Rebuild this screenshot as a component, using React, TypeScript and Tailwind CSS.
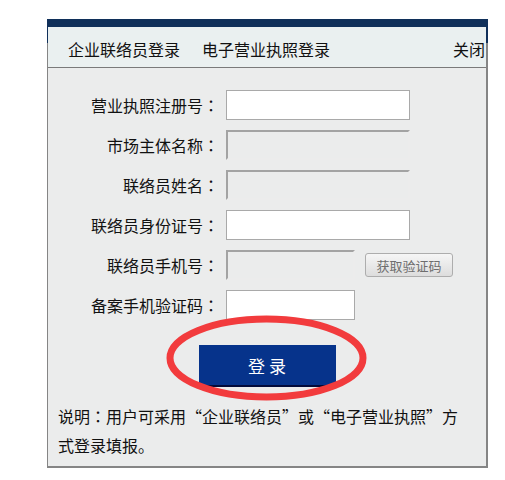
import React from "react"

const campos = [
    { label: "营业执照注册号", tipo: "input", largura: "w-[184px]" },
    { label: "市场主体名称", tipo: "disabled", largura: "w-[184px]" },
    { label: "联络员姓名", tipo: "disabled", largura: "w-[184px]" },
    { label: "联络员身份证号", tipo: "input", largura: "w-[184px]" },
    { label: "联络员手机号", tipo: "disabled", largura: "w-[129px]", botao: true },
    { label: "备案手机验证码", tipo: "input", largura: "w-[129px]" },
]

// dois-pontos centralizado na célula, como no original
const Colon = () => (
    <span lang="ja" style={{ fontFamily: '"Noto Sans CJK JP", sans-serif' }}>：</span>
)

export default function App() {
    return (
        <div
            lang="zh-CN"
            className="relative w-[505px] h-[480px] bg-white pt-[19px] text-[#111]"
            style={{ fontFamily: '"Noto Sans CJK SC", "Noto Sans", sans-serif' }}
        >
            <div className="ml-[47px] w-[441px]">
                {/* barra azul do topo */}
                <div className="h-[8px] bg-[#10305a]" />

                <div className="relative bg-[#ebecec] border-l border-r-2 border-b-2 border-[#858585]">
                    <div className="absolute left-[-1px] top-0 w-[1px] h-[16px] bg-[#10305a]" />
                    <div className="absolute right-[-2px] top-0 w-[2px] h-[16px] bg-[#10305a]" />

                    {/* Cabeçalho */}
                    <div className="h-[41px] bg-[#eaf0f0] border-b border-[#7a7a7a] flex items-center pl-[20px] pr-[1px] text-[16px] leading-[16px] pt-[3px]">
                        <span>企业联络员登录</span>
                        <span className="ml-[22px]">电子营业执照登录</span>
                        <span className="ml-auto">关闭</span>
                    </div>

                    {/* Campos */}
                    <div className="flex flex-col gap-[10px] pt-[22px]">
                        {campos.map(c => (
                            <div key={c.label} className="flex items-center h-[30px]">
                                <label className="w-[171px] text-right text-[16px] leading-[16px]">
                                    {c.label}<Colon />
                                </label>
                                <div
                                    className={
                                        c.tipo === "input"
                                            ? `ml-[7px] h-[30px] ${c.largura} bg-white border border-[#a9a9a9]`
                                            : `ml-[7px] h-[30px] ${c.largura} bg-[#ebecec] border-2 border-t-[#a3a3a3] border-l-[#a3a3a3] border-r-[#ececec] border-b-[#ececec]`
                                    }
                                />
                                {c.botao && (
                                    <button className="ml-[10px] w-[88px] h-[24px] rounded-[3px] border border-[#adadad] bg-gradient-to-b from-[#f6f6f6] to-[#dddddd] text-[13px] leading-[13px] text-[#6e6e6e]">
                                        获取验证码
                                    </button>
                                )}
                            </div>
                        ))}
                    </div>

                    <div className="flex justify-center mt-[25px]">
                        <button className="w-[137px] h-[42px] bg-[#06338b] border-b-2 border-[#020a3a] text-white text-[17px] leading-[17px]">
                            登 录
                        </button>
                    </div>

                    {/* Explicação */}
                    <p className="mt-[15px] ml-[10px] w-[404px] text-[16px] leading-[29px] pb-[6px]">
                        说明<Colon />用户可采用“企业联络员”或“电子营业执照”方式登录填报。
                    </p>
                </div>
            </div>

            {/* marcação vermelha */}
            <svg className="absolute left-[166px] top-[315px]" width="201" height="86" viewBox="0 0 201 86">
                <ellipse cx="100.5" cy="43" rx="96.5" ry="39" fill="none" stroke="#f23b3d" strokeWidth="7" />
            </svg>
        </div>
    )
}
